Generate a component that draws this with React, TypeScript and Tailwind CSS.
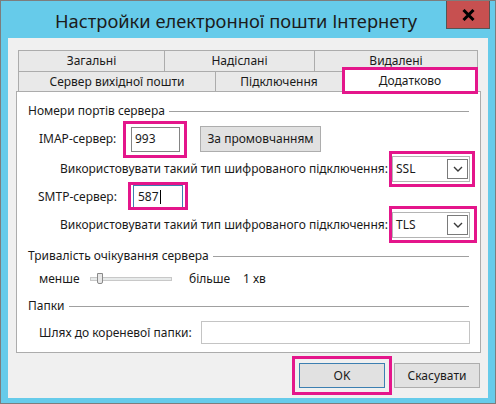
import React from 'react';

function Pink({ className }: { className: string }) {
  return <span className={`pointer-events-none absolute border-[3px] border-[#e4168b] ${className}`} />;
}

function Combo({ value }: { value: string }) {
  return (
    <div className="relative flex h-[26px] w-[78px] items-center border border-[#b4b4b4] bg-white pl-[3px]">
      <span className="flex-1">{value}</span>
      <span className="mr-[1px] flex h-[20px] w-[21px] items-center justify-center border border-[#7a7a7a] bg-white">
        <svg width="10" height="6" viewBox="0 0 10 6">
          <path d="M1 1 L5 5 L9 1" fill="none" stroke="#3a3a3a" strokeWidth="1.4" />
        </svg>
      </span>
    </div>
  );
}

function GroupTitle({ title }: { title: string }) {
  return (
    <div className="flex h-[16px] items-center gap-[4px] pl-[11px] pr-[11px]">
      <span className="whitespace-nowrap">{title}</span>
      <div className="h-px flex-1 bg-[#a0a0a0]" />
    </div>
  );
}

export default function App() {
  const row1 = [
    { label: 'Загальні', w: 'w-[146px]' },
    { label: 'Надіслані', w: 'w-[150px]' },
    { label: 'Видалені', w: 'w-[164px]' },
  ];

  return (
    <div className="flex h-[404px] w-[496px] flex-col border border-[#7d7d7d] bg-[#66cbea] font-['Noto_Sans',sans-serif] text-[12px] leading-[16px] text-[#1a1a1a]">
      {/* title bar */}
      <div className="flex h-[37px] items-start">
        <div className="mt-[6px] min-w-0 flex-1 whitespace-nowrap pl-[54px] text-[18.3px] leading-[28px] text-[#1c1c1c]">
          Настройки електронної пошти Інтернету
        </div>
        <button className="mr-[5px] flex h-[28px] w-[44px] shrink-0 items-center justify-center border-x border-b border-[#555] bg-[#c75050]">
          <svg width="13" height="12" viewBox="0 0 13 12">
            <path d="M1.5 1 L11.5 11 M11.5 1 L1.5 11" stroke="#000" strokeWidth="3" />
          </svg>
        </button>
      </div>

      {/* client area */}
      <div className="mx-[7px] flex h-[360px] flex-col bg-[#f0f0f0]">
        <div className="ml-[10px] mt-[12px] w-[460px]">
          <div className="flex h-[21px]">
            {row1.map((t, i) => (
              <div
                key={t.label}
                className={`${t.w} flex items-center justify-center border-l border-t border-[#acacac] bg-[#e9e9e9] ${i === 2 ? 'border-r' : ''}`}
              >
                {t.label}
              </div>
            ))}
          </div>
          <div className="flex h-[20px] items-start border-t border-[#acacac]">
            <div className="flex h-[20px] w-[197px] items-center justify-center border-l border-[#acacac] bg-[#e9e9e9]">
              Сервер вихідної пошти
            </div>
            <div className="flex h-[20px] w-[127px] items-center justify-center border-l border-[#acacac] bg-[#e9e9e9]">
              Підключення
            </div>
            <div className="relative z-10 -mt-[5px] flex h-[27px] w-[136px] items-center justify-center border-[3px] border-[#e4168b] bg-white">
              Додатково
            </div>
          </div>
        </div>

        {/* panel */}
        <div className="ml-[8px] flex h-[262px] w-[465px] flex-col border border-[#acacac] bg-white">
          <div className="mt-[11px]">
            <GroupTitle title="Номери портів сервера" />
          </div>

          <div className="mt-[7px] flex h-[26px] items-center pl-[22px]">
            <span className="w-[92px]">IMAP-сервер:</span>
            <div className="relative">
              <div className="flex h-[25px] w-[49px] items-center border border-[#848484] bg-white pl-[3px]">993</div>
              <Pink className="-bottom-[6px] -left-[8px] -right-[7px] -top-[6px]" />
            </div>
            <button className="ml-[20px] h-[26px] w-[121px] border border-[#adadad] bg-[#e1e1e1]">За промовчанням</button>
          </div>

          <div className="mt-[4px] flex h-[26px] items-center justify-end gap-[4px] pr-[10px]">
            <span>Використовувати такий тип шифрованого підключення:</span>
            <div className="relative">
              <Combo value="SSL" />
              <Pink className="-bottom-[5px] -left-[3px] -right-[5px] -top-[5px]" />
            </div>
          </div>

          <div className="mt-[3px] flex h-[23px] items-center pl-[21px]">
            <span className="w-[95px]">SMTP-сервер:</span>
            <div className="relative">
              <div className="flex h-[23px] w-[50px] items-center border border-[#3c7fb1] bg-white pl-[4px]">
                587<span className="ml-px h-[14px] w-px bg-black" />
              </div>
              <Pink className="-bottom-[2px] -left-[5px] -right-[5px] -top-[3px]" />
            </div>
          </div>

          <div className="mt-[4px] flex h-[25px] items-center justify-end gap-[4px] pr-[10px]">
            <span>Використовувати такий тип шифрованого підключення:</span>
            <div className="relative">
              <Combo value="TLS" />
              <Pink className="-bottom-[5px] -left-[3px] -right-[7px] -top-[6px]" />
            </div>
          </div>

          <div className="mt-[11px]">
            <GroupTitle title="Тривалість очікування сервера" />
          </div>

          <div className="mt-[7px] flex h-[16px] items-center pl-[22px]">
            <span className="w-[51px]">менше</span>
            <div className="relative flex h-[12px] w-[82px] items-center">
              <div className="h-[4px] w-full border border-[#c8c8c8] bg-[#e7eaea]" />
              <div className="absolute left-[7px] top-0 h-[11px] w-[6px] rounded-b-[2px] border border-[#8a8a8a] bg-[#e8e8e8]" />
            </div>
            <span className="ml-[17px] w-[54px]">більше</span>
            <span>1 хв</span>
          </div>

          <div className="mt-[11px]">
            <GroupTitle title="Папки" />
          </div>

          <div className="mt-[7px] flex h-[23px] items-center pl-[22px] pr-[10px]">
            <span className="w-[162px]">Шлях до кореневої папки:</span>
            <div className="h-[23px] flex-1 border border-[#c4c4c4] bg-white" />
          </div>
        </div>

        {/* buttons */}
        <div className="mt-[10px] flex justify-end gap-[9px] pr-[8px]">
          <div className="relative">
            <button className="h-[25px] w-[86px] border border-[#3c7fb1] bg-[#e1e1e1]">OK</button>
            <Pink className="-bottom-[7px] -left-[7px] -right-[7px] -top-[7px]" />
          </div>
          <button className="h-[25px] w-[86px] border border-[#adadad] bg-[#e1e1e1]">Скасувати</button>
        </div>
      </div>
    </div>
  );
}
